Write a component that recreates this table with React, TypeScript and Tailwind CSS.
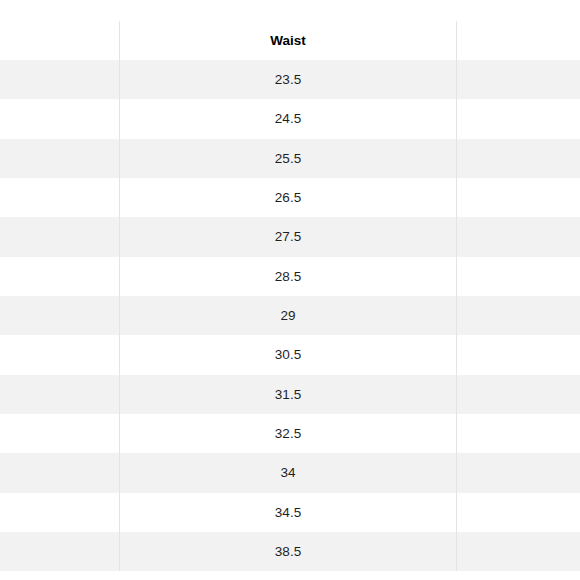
const waist = ["23.5", "24.5", "25.5", "26.5", "27.5", "28.5", "29", "30.5", "31.5", "32.5", "34", "34.5", "38.5"]

function Row({ value, shaded, header = false }: { value: string; shaded: boolean; header?: boolean }) {
  return (
    <div className={`flex ${header ? "h-[39px]" : "h-[39.35px]"} ${shaded ? "bg-[#f2f2f2]" : "bg-white"}`}>
      <div className="w-[119px]" />
      <div
        className={`w-[338px] border-x border-[#e4e4e4] flex items-center justify-center pt-[1px] text-[13.5px] text-[#1f1f1f] ${
          header ? "font-bold text-black" : ""
        }`}
      >
        {value}
      </div>
      <div className="flex-1" />
    </div>
  )
}

export default function App() {
  return (
    <div className="w-[580px] h-[580px] bg-white pt-[21px] overflow-hidden" style={{ fontFamily: '"Liberation Sans", Arial, sans-serif' }}>
      {/* header */}
      <Row value="Waist" shaded={false} header />

      {/* size rows, every other one shaded */}
      {waist.map((w, i) => (
        <Row key={w} value={w} shaded={i % 2 === 0} />
      ))}
    </div>
  )
}
